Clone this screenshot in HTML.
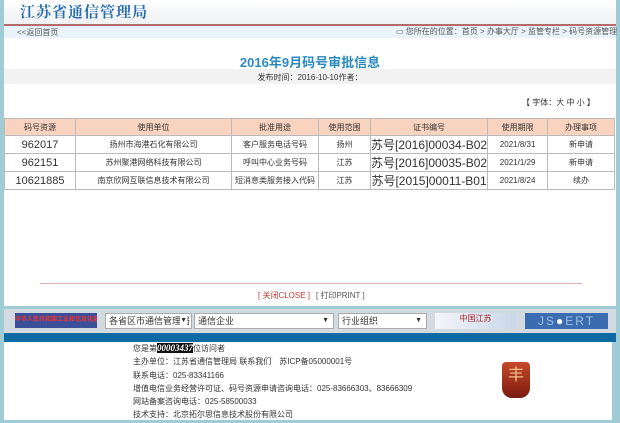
<!DOCTYPE html>
<html><head><meta charset="utf-8"><style>
*{margin:0;padding:0;box-sizing:border-box}
body{width:620px;height:423px;background:#9fccd5;position:relative;overflow:hidden;font-family:"Liberation Sans","Noto Sans CJK SC",sans-serif;color:#333}
.a{position:absolute}
.t{font-size:8px;white-space:nowrap}
table{border-collapse:collapse;position:absolute;left:4px;top:118px;width:611px}
td{border:1px solid #bbb;text-align:center;font-size:8px;height:18px;padding:0;white-space:nowrap}
tr.h td{background:#f8d3bf;height:17px}
.n{font-size:11px}.c{font-size:12px}
.sel{position:absolute;top:313px;height:16px;background:#fff;border:1px solid #aaa;font-size:9px;line-height:14px;padding-left:3px;white-space:nowrap;overflow:hidden}
.sel b{position:absolute;right:4px;top:0;font-size:7px;background:#fff}
</style></head><body>
<div class="a" style="left:4px;top:0;width:612px;height:306px;background:#fff"></div>
<div class="a" style="left:4px;top:0;width:612px;height:24px;background:linear-gradient(#fff,#eef0f2)"></div>
<div class="a" style="left:20px;top:3px;font-family:'Noto Serif CJK SC',serif;font-weight:bold;font-size:15px;color:#2a6fb0;letter-spacing:1px;line-height:18px">江苏省通信管理局</div>
<div class="a" style="left:4px;top:24px;width:612px;height:2px;background:#b76a6a"></div>
<div class="a" style="left:4px;top:26px;width:612px;height:12px;background:#e9f4fa"></div>
<div class="a t" style="left:17px;top:27px;color:#555">&lt;&lt;返回首页</div>
<div class="a t" style="left:396px;top:26px;color:#555">▭ 您所在的位置：首页 &gt; 办事大厅 &gt; 监管专栏 &gt; 码号资源管理</div>
<div class="a" style="left:4px;top:69px;width:612px;height:15px;background:#f2f2f2"></div>
<div class="a" style="left:0;width:620px;top:56px;text-align:center;font-size:13px;line-height:14px;font-weight:bold;color:#2a8ac0">2016年9月码号审批信息</div>
<div class="a t" style="left:0;width:620px;top:72px;text-align:center">发布时间：2016-10-10作者：</div>
<div class="a t" style="left:522px;top:97px">【 字体：大 中 小 】</div>
<table>
<tr class="h"><td style="width:71px">码号资源</td><td style="width:156px">使用单位</td><td style="width:87px">批准用途</td><td style="width:52px">使用范围</td><td style="width:110px">证书编号</td><td style="width:60px">使用期限</td><td>办理事项</td></tr>
<tr><td class="n">962017</td><td>扬州市海港石化有限公司</td><td>客户服务电话号码</td><td>扬州</td><td class="c">苏号[2016]00034-B02</td><td>2021/8/31</td><td>新申请</td></tr>
<tr><td class="n">962151</td><td>苏州聚港网络科技有限公司</td><td>呼叫中心业务号码</td><td>江苏</td><td class="c">苏号[2016]00035-B02</td><td>2021/1/29</td><td>新申请</td></tr>
<tr><td class="n">10621885</td><td>南京欣网互联信息技术有限公司</td><td>短消息类服务接入代码</td><td>江苏</td><td class="c">苏号[2015]00011-B01</td><td>2021/8/24</td><td>续办</td></tr>
</table>
<div class="a" style="left:40px;top:283px;width:542px;height:1px;background:#e0b0b0"></div>
<div class="a t" style="left:258px;top:290px;color:#c33">[ 关闭CLOSE ]</div>
<div class="a t" style="left:316px;top:290px;color:#555">[ 打印PRINT ]</div>
<div class="a" style="left:4px;top:309px;width:612px;height:24px;background:#d3dbe0"></div>
<div class="a" style="left:15px;top:313px;width:82px;height:15px;background:#3a4f9a;color:#e33;font-size:6px;line-height:15px;text-align:center;font-weight:bold;white-space:nowrap;overflow:hidden">中华人民共和国工业和信息化部</div>
<div class="sel" style="left:105px;width:87px">各省区市通信管理局<b>▼</b></div>
<div class="sel" style="left:194px;width:140px">通信企业<b>▼</b></div>
<div class="sel" style="left:338px;width:89px">行业组织<b>▼</b></div>
<div class="a" style="left:435px;top:313px;width:81px;height:16px;background:linear-gradient(90deg,#f4f6fa,#c9d7e8);font-size:8px;color:#a22;text-align:center;line-height:12px">中国江苏</div>
<div class="a" style="left:525px;top:313px;width:83px;height:16px;background:#3c6cb0;color:#9fc0ea;font-size:12px;text-align:center;line-height:16px;letter-spacing:2px">JS<span style="color:#fff">●</span>ERT</div>
<div class="a" style="left:4px;top:333px;width:612px;height:9px;background:#0e6aa3"></div>
<div class="a" style="left:4px;top:342px;width:608px;height:78px;background:#fff"></div>
<div class="a t" style="left:133px;top:342px;line-height:13.3px">您是第<span style="background:#111;color:#fff;font-weight:bold;font-style:italic;font-size:9px;font-family:'Liberation Serif',serif">00003437</span>位访问者<br>主办单位：江苏省通信管理局 联系我们　苏ICP备05000001号<br>联系电话：025-83341166<br>增值电信业务经营许可证、码号资源申请咨询电话：025-83666303、83666309<br>网站备案咨询电话：025-58500033<br>技术支持：北京拓尔思信息技术股份有限公司</div>
<div class="a" style="left:502px;top:362px;width:28px;height:36px;background:linear-gradient(#c44a2a,#7a1a10);border-radius:4px 4px 10px 10px;color:#f4c08a;font-size:16px;text-align:center;line-height:28px">丰</div>
</body></html>
